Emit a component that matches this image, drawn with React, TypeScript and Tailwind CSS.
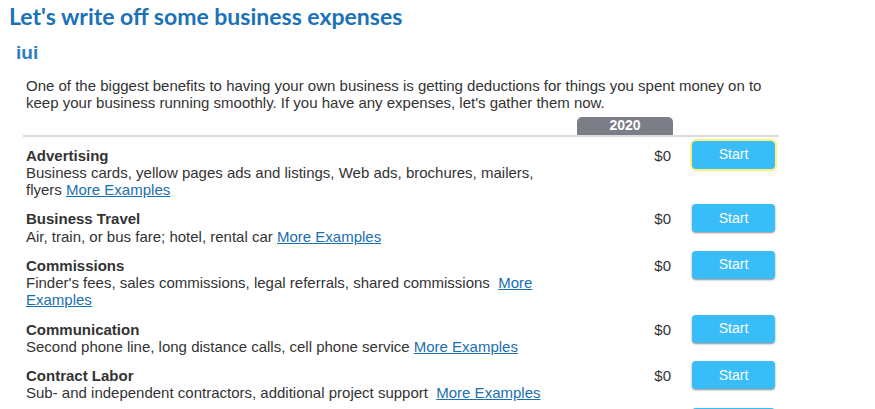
import React from 'react';

type Expense = {
  title: string;
  desc: string;
  gap?: boolean;
  amount: string;
  focused?: boolean;
};

const expenses: Expense[] = [
  {
    title: 'Advertising',
    desc: 'Business cards, yellow pages ads and listings, Web ads, brochures, mailers, flyers',
    amount: '$0',
    focused: true,
  },
  { title: 'Business Travel', desc: 'Air, train, or bus fare; hotel, rental car', amount: '$0' },
  {
    title: 'Commissions',
    desc: "Finder's fees, sales commissions, legal referrals, shared commissions",
    gap: true,
    amount: '$0',
  },
  {
    title: 'Communication',
    desc: 'Second phone line, long distance calls, cell phone service',
    amount: '$0',
  },
  {
    title: 'Contract Labor',
    desc: 'Sub- and independent contractors, additional project support',
    gap: true,
    amount: '$0',
  },
  { title: 'Depreciation', desc: 'Equipment, furniture, vehicles', amount: '$0' },
];

// Una fila de gasto con monto y botón Start
const ExpenseRow: React.FC<{ item: Expense }> = ({ item }) => (
  <div className="flex items-start pb-[6px]">
    <div className="w-[554px] pl-[3px] pr-[15px] pt-[6px] text-[15px] leading-[17.25px] text-[#333]">
      <div className="font-bold">{item.title}</div>
      <div>
        {item.desc}
        {item.gap ? '\u00a0 ' : ' '}
        <a href="#" className="text-[#1a6fb0] underline">
          More Examples
        </a>
      </div>
    </div>
    <div className="w-[96px] pt-[6px] pr-[2px] text-right text-[15px] leading-[17.25px] text-[#333]">
      {item.amount}
    </div>
    <button
      className={`ml-[19px] h-[28px] w-[83px] rounded-[4px] bg-[#38bdf8] text-[14px] text-white shadow-[0_1px_2px_rgba(0,0,0,0.45)] ${
        item.focused ? 'outline outline-2 outline-[#fff27a] shadow-[0_0_4px_2px_#fff59a]' : ''
      }`}
    >
      Start
    </button>
  </div>
);

export default function App() {
  return (
    <div className="h-[409px] w-[875px] overflow-hidden bg-white font-['Liberation_Sans',Arial,sans-serif]">
      <h1 className="pl-[9px] pt-[2px] font-['Lato',sans-serif] text-[23px] font-bold leading-[28px] text-[#1b72b8]">
        Let's write off some business expenses
      </h1>
      <h2 className="mt-[12px] pl-[16px] text-[19px] font-bold leading-[22px] text-[#2b7dc4]">iui</h2>
      <div className="ml-[23px] w-[756px]">
        <p className="mt-[13px] pl-[3px] text-[15px] leading-[17.25px] text-[#333]">
          One of the biggest benefits to having your own business is getting deductions for things you spent money on to
          keep your business running smoothly. If you have any expenses, let's gather them now.
        </p>
        <div className="mt-[5px] flex">
          <div className="w-[554px]" />
          <div className="flex h-[18px] w-[96px] items-center justify-center rounded-t-[5px] bg-[#7b7e86] text-[14px] font-bold text-white">
            2020
          </div>
        </div>
        <div className="h-[2px] bg-[#dcdcdc]" />
        <div className="mt-[4px]">
          {expenses.map((e) => (
            <ExpenseRow key={e.title} item={e} />
          ))}
        </div>
      </div>
    </div>
  );
}
